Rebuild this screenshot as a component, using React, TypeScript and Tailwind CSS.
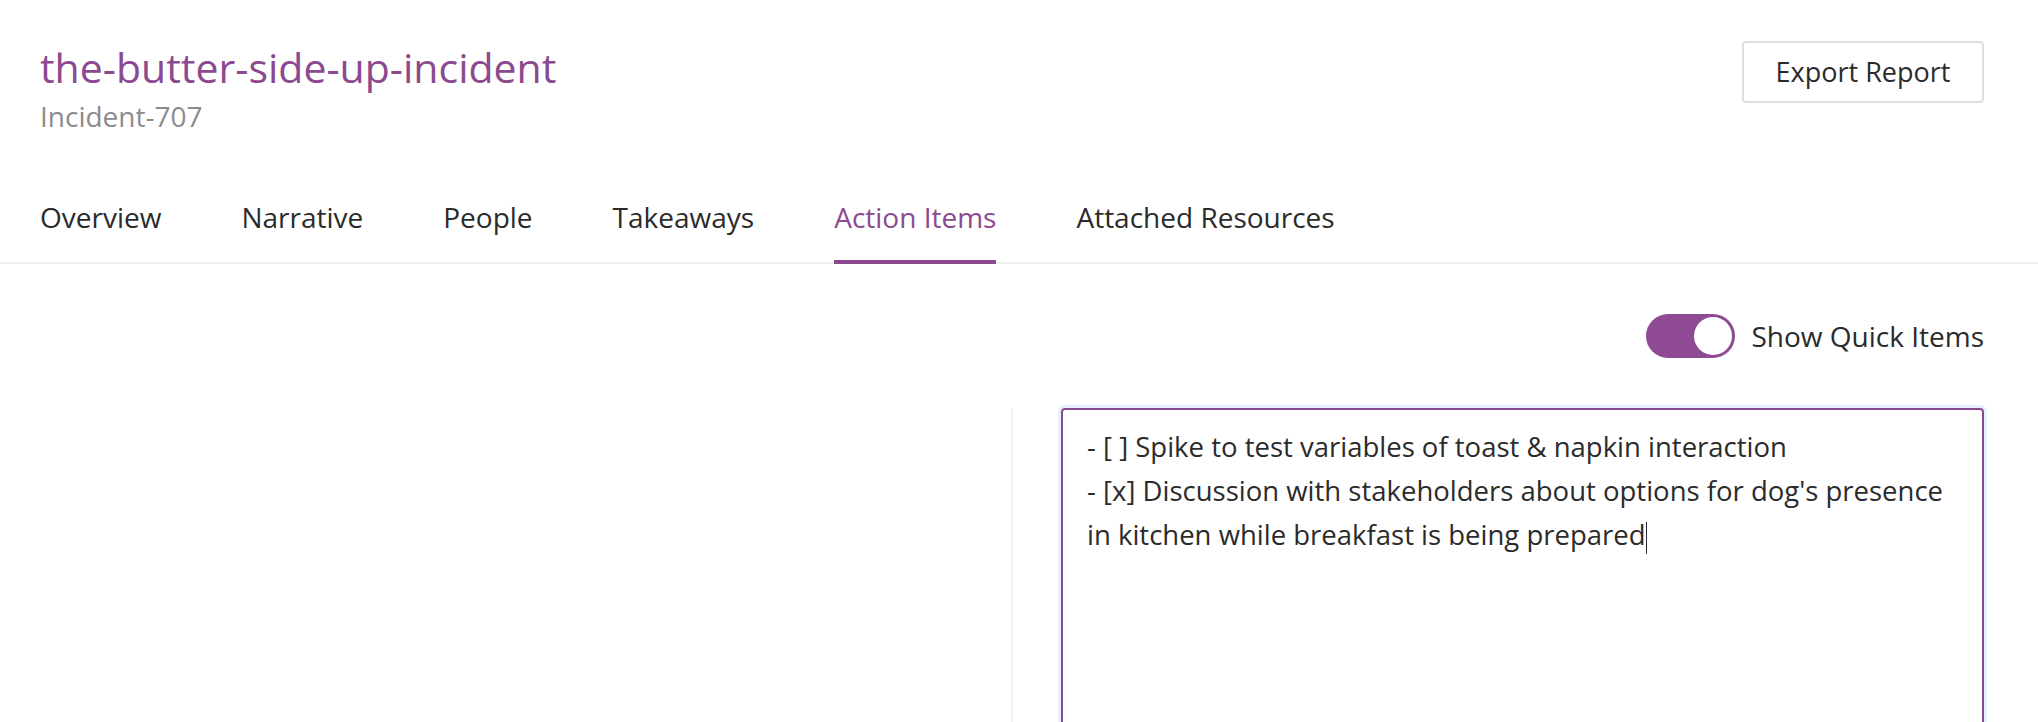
import { useState } from 'react'

const tabs = ['Overview', 'Narrative', 'People', 'Takeaways', 'Action Items', 'Attached Resources']

export default function App() {
  const [active, setActive] = useState('Action Items')
  const [quick, setQuick] = useState(true)

  return (
    <div className="w-full h-[722px] overflow-hidden bg-white text-[#2b2b2b] font-['Open_Sans',sans-serif]">
      {/* header */}
      <div className="flex items-start justify-between pl-10 pr-[54px] pt-[41px]">
        <div className="pt-[2px]">
          <h1 className="text-[41px] leading-[48px] text-[#8b4a8f]">the-butter-side-up-incident</h1>
          <p className="text-[28px] leading-[36px] mt-[7px] text-[#8c8c8c]">Incident-707</p>
        </div>
        <button className="w-[242px] h-[62px] rounded-[4px] border-2 border-[#dedede] bg-white text-[27px] text-[#2b2b2b]">
          Export Report
        </button>
      </div>

      {/* tabs */}
      <div className="mt-[65px] flex gap-20 pl-10 border-b-2 border-[#efefef]">
        {tabs.map((t) => (
          <button
            key={t}
            onClick={() => setActive(t)}
            className={
              'pb-[25px] -mb-[2px] border-b-4 text-[28px] leading-[36px] ' +
              (t === active ? 'border-[#8b4a8f] text-[#8b4a8f]' : 'border-transparent text-[#2b2b2b]')
            }
          >
            {t}
          </button>
        ))}
      </div>

      {/* quick items toggle */}
      <div className="flex justify-end items-center gap-4 pr-[54px] mt-[50px]">
        <button
          onClick={() => setQuick(!quick)}
          className={'w-[89px] h-[44px] rounded-full p-[3px] flex ' + (quick ? 'bg-[#8e4a92] justify-end' : 'bg-[#d6d6d6] justify-start')}
        >
          <span className="w-[38px] h-[38px] rounded-full bg-white" />
        </button>
        <span className="text-[28px] leading-[42px]">Show Quick Items</span>
      </div>

      {/* body */}
      <div className="grid grid-cols-[1011px_1fr] mt-[50px] h-[400px]">
        <div />
        <div className="border-l-2 border-[#f3f3f3] pl-[48px] pr-[54px]">
          <div className="h-[360px] rounded-[4px] border-2 border-[#8b4a8f] shadow-[0_0_0_3px_#e6efff] px-6 pt-[15px] text-[27.5px] leading-[44px] whitespace-pre-wrap">
            {'- [ ] Spike to test variables of toast & napkin interaction\n- [x] Discussion with stakeholders about options for dog\'s presence in kitchen while breakfast is being prepared'}
            <span className="inline-block w-px h-[32px] bg-[#2b2b2b] align-middle" />
          </div>
        </div>
      </div>
    </div>
  )
}
